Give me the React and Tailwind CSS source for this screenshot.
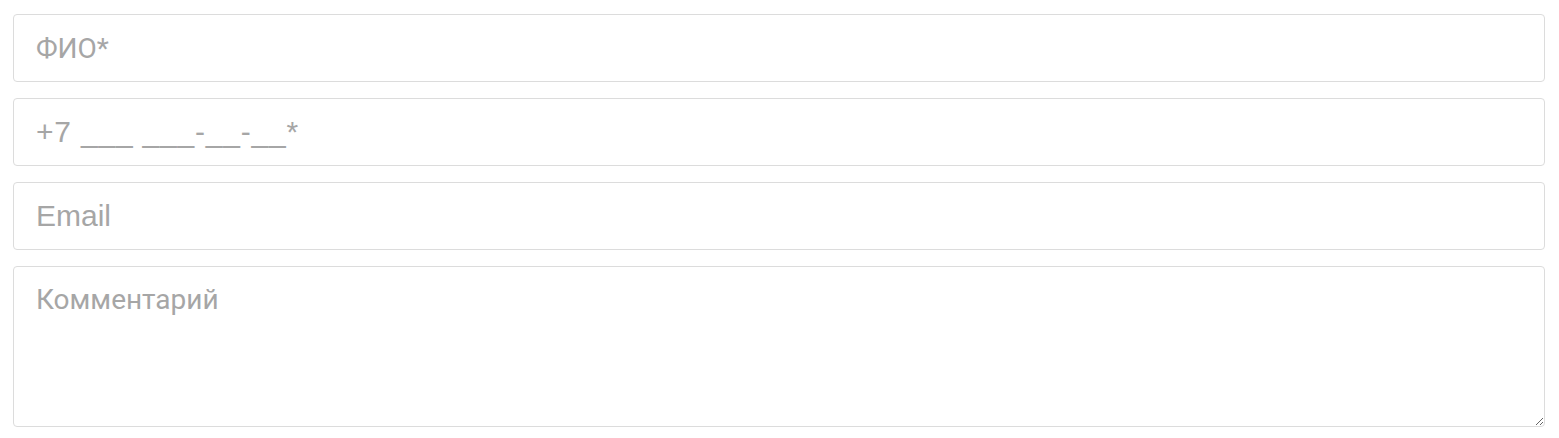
export default function App() {
  return (
    <div className="min-h-screen bg-white pl-[13px] pr-[14px] pt-[14px]">
      <form className="flex flex-col gap-4">
        <input
          type="text"
          placeholder="ФИО*"
          className="h-[68px] w-full rounded-[4px] border border-[#dcdcdc] bg-white px-[22px] font-['Roboto',sans-serif] text-[28px] text-[#333] outline-none placeholder:text-[#a6a6a6]"
        />
        <input
          type="tel"
          placeholder="+7 ___ ___-__-__*"
          className="h-[68px] w-full rounded-[4px] border border-[#dcdcdc] bg-white px-[22px] font-['Liberation_Sans',sans-serif] text-[30px] tracking-[0.8px] text-[#333] outline-none placeholder:text-[#a6a6a6]"
        />
        <input
          type="email"
          placeholder="Email"
          className="h-[68px] w-full rounded-[4px] border border-[#dcdcdc] bg-white px-[22px] font-['Liberation_Sans',sans-serif] text-[30px] text-[#333] outline-none placeholder:text-[#a6a6a6]"
        />
        <textarea
          placeholder="Комментарий"
          className="block h-[161px] w-full rounded-[4px] border border-[#dcdcdc] bg-white px-[22px] pt-[12px] font-['Roboto',sans-serif] text-[28px] text-[#333] outline-none placeholder:text-[#a6a6a6]"
        />
      </form>
    </div>
  );
}
